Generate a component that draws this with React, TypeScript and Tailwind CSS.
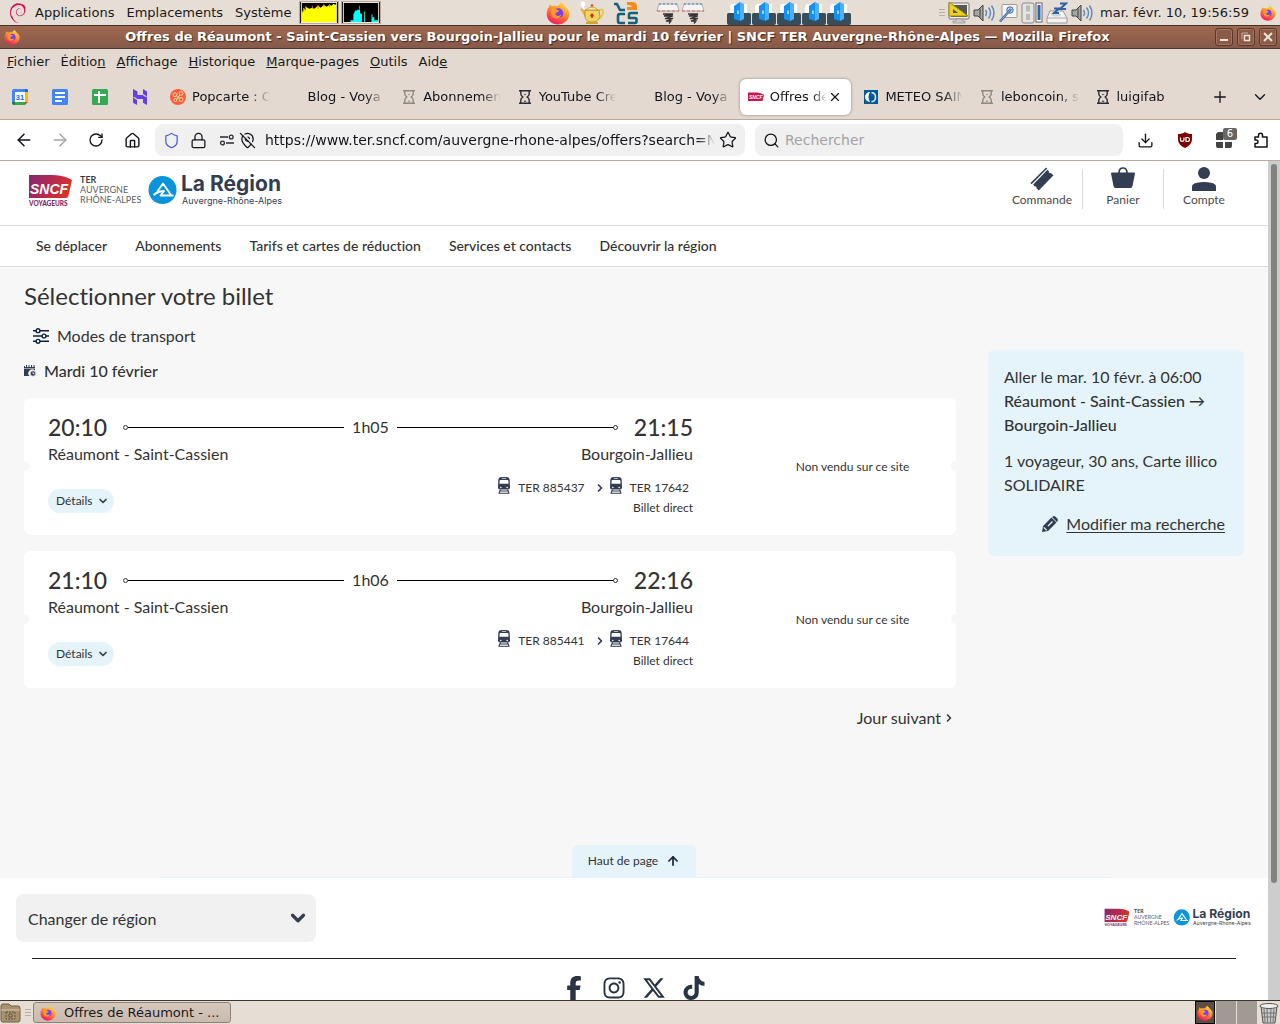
import type { ReactNode } from "react";
import {
  ArrowLeft,
  ArrowRight,
  ArrowUp,
  ChevronDown,
  ChevronRight,
  Download,
  House,
  Lock,
  MapPinOff,
  Plus,
  RotateCw,
  Search,
  Shield,
  Star,
  X,
} from "lucide-react";
import { FaFacebookF, FaInstagram, FaTiktok, FaXTwitter } from "react-icons/fa6";
import { SiDebian } from "react-icons/si";

type Tab = { title: string; icon?: ReactNode; active?: boolean };

type Offer = {
  departure: string;
  arrival: string;
  duration: string;
  from: string;
  to: string;
  trains: string[];
};

const offers: Offer[] = [
  {
    departure: "20:10",
    arrival: "21:15",
    duration: "1h05",
    from: "Réaumont - Saint-Cassien",
    to: "Bourgoin-Jallieu",
    trains: ["TER 885437", "TER 17642"],
  },
  {
    departure: "21:10",
    arrival: "22:16",
    duration: "1h06",
    from: "Réaumont - Saint-Cassien",
    to: "Bourgoin-Jallieu",
    trains: ["TER 885441", "TER 17644"],
  },
];

/* ---------- Icons ---------- */

function FirefoxIcon({ className }: { className?: string }) {
  return (
    <svg viewBox="0 0 24 24" className={className} aria-hidden="true">
      <defs>
        <linearGradient id="ff-body" x1="0.8" y1="0" x2="0.3" y2="1">
          <stop offset="0" stopColor="#ffe14a" />
          <stop offset="0.45" stopColor="#ff9028" />
          <stop offset="0.75" stopColor="#ff4a45" />
          <stop offset="1" stopColor="#e9146f" />
        </linearGradient>
      </defs>
      <path
        d="M15 1c3 2 3.500 4 5 5.500C22.300 8.500 23.500 10.500 23.300 13.500 23 19 18 23.500 12 23.500S.7 19 .7 13C.7 10 1.700 7.500 3 6c0-1 .2-2 .8-2.800C4.500 4.200 5.300 5 6.500 5.300 8 4.500 9 4.800 10.500 5.200 12 4.500 14.500 3.500 15 1z"
        fill="url(#ff-body)"
      />
      <circle cx="12.300" cy="12.300" r="5" fill="#7a3ff0" />
      <path d="M6 8c2-1 4-.5 5 .8 1.500.2 2 .7 1.500 1.700-1 1.200-3 .8-3.200 2.500.5 2.500 4.500 2.500 6 .5-1 5.500-9 5.500-10 0C5 11.500 5 9.500 6 8z" fill="#ff9a28" />
    </svg>
  );
}

function HourglassIcon({ className }: { className?: string }) {
  return (
    <svg viewBox="0 0 16 16" className={className} fill="none" stroke="currentColor" strokeWidth="1.400" aria-hidden="true">
      <path d="M2 1.700h12M2 14.300h12" />
      <path d="M3.800 2v3q0 1.500 2 3-2 1.500-2 3v3M12.200 2v3q0 1.500-2 3 2 1.500 2 3v3" />
      <path d="M6.800 5h2.400L8 6.300zM6.500 12.800L8 11.300l1.500 1.500z" fill="currentColor" stroke="none" />
    </svg>
  );
}

function CalendarTabIcon() {
  return (
    <svg viewBox="0 0 16 16" className="size-4" aria-hidden="true">
      <path d="M0 2a2 2 0 0 1 2-2h11v3H3v10H0z" fill="#4285f4" />
      <path d="M13 0h1.500A1.500 1.500 0 0 1 16 1.500V3h-3z" fill="#1967d2" />
      <path d="M13 3h3v10h-3z" fill="#fbbc04" />
      <path d="M0 13h3v3H2a2 2 0 0 1-2-2z" fill="#188038" />
      <path d="M3 13h10v3H3z" fill="#34a853" />
      <path d="M13 13h3l-3 3z" fill="#ea4335" />
      <path d="M3 3h10v10H3z" fill="#fff" />
      <text x="8" y="11" fontSize="7.500" fontWeight="700" textAnchor="middle" fill="#1967d2" fontFamily="Liberation Sans">31</text>
    </svg>
  );
}

function DocsTabIcon() {
  return (
    <svg viewBox="0 0 16 16" className="size-4" aria-hidden="true">
      <rect width="16" height="16" rx="1.500" fill="#4285f4" />
      <path d="M3 4h10M3 8h10M3 12h7" stroke="#fff" strokeWidth="2" />
    </svg>
  );
}

function SheetsTabIcon() {
  return (
    <svg viewBox="0 0 16 16" className="size-4" aria-hidden="true">
      <rect width="16" height="16" rx="1.500" fill="#34a853" />
      <path d="M2 6h12M7 2v12" stroke="#fff" strokeWidth="2" />
    </svg>
  );
}

function HTabIcon() {
  return (
    <svg viewBox="0 0 16 16" className="size-4" fill="#673de6" aria-hidden="true">
      <path d="M1 0l4.500 2.500V6h5l3.500 2.200H1zM11 5V0l4 2.400V7.500zM15 16l-4-2.300V10H5.500L2 7.800h13zM5 11v5l-4-2.200V8.500z" />
    </svg>
  );
}

function PopcarteIcon() {
  return (
    <svg viewBox="0 0 16 16" className="size-4" fill="none" stroke="#ffe0a0" aria-hidden="true">
      <circle cx="8" cy="8" r="8" fill="#ff5a3c" stroke="none" />
      <circle cx="5" cy="5.700" r="1.900" />
      <circle cx="11" cy="4.500" r="1.900" />
      <circle cx="11" cy="10.500" r="2" />
      <circle cx="5.300" cy="11" r="1.500" />
      <path d="M6.500 7l3 2.300M9.800 6l-3 4" />
    </svg>
  );
}

function MeteoIcon() {
  return (
    <svg viewBox="0 0 16 16" className="size-4" aria-hidden="true">
      <rect x="1" y="1" width="14" height="14" fill="#005a96" />
      <path d="M7 3a5 5 0 0 0 0 10c-2-3-2-7 0-10z" fill="#fff" />
      <path d="M8.500 3.500a4.700 4.700 0 0 1 0 9.300" fill="none" stroke="#dcebf5" strokeWidth="1.600" />
    </svg>
  );
}

function SncfTabIcon() {
  return (
    <svg viewBox="0 0 16 16" className="size-4" aria-hidden="true">
      <path d="M0 3.500h9.500Q14 4 16 6l-1.500 6H0z" fill="#d0124a" />
      <text x="1" y="10" fontSize="5" fontWeight="700" fontStyle="italic" fill="#fff" fontFamily="Liberation Sans">SNCF</text>
    </svg>
  );
}

function TuneIcon() {
  return (
    <svg viewBox="0 0 16 12" className="h-3 w-4" fill="none" stroke="#2b2a33" strokeWidth="1.300" aria-hidden="true">
      <path d="M1 3h8M7 9h8" />
      <circle cx="12.200" cy="3" r="1.900" />
      <circle cx="3.500" cy="9" r="1.900" />
    </svg>
  );
}

function UblockIcon() {
  return (
    <svg viewBox="0 0 16 16" className="size-4" aria-hidden="true">
      <path d="M8 0c2 1.500 4 2 7 2v5c0 4.500-3 7-7 9-4-2-7-4.500-7-9V2c3 0 5-.5 7-2z" fill="#800000" />
      <path d="M3.500 5.500v2.200c0 2.200 3.500 2.200 3.500 0V5.500M9 5.500v4h1.500a2 2 0 0 0 0-4z" fill="none" stroke="#fff" strokeWidth="1.200" />
    </svg>
  );
}

function ExtensionsIcon() {
  return (
    <svg viewBox="0 0 16 16" className="size-4" fill="none" stroke="currentColor" strokeWidth="1.500" strokeLinejoin="round" aria-hidden="true">
      <path d="M2 5h3.500V3.300a2 2 0 0 1 4 0V5H14v10H2v-3.500h1.200a1.700 1.700 0 0 0 0-3.500H2z" />
    </svg>
  );
}

function SpeakerIcon() {
  return (
    <svg viewBox="0 0 22 20" className="h-5 w-[22px]" fill="none" aria-hidden="true">
      <path d="M1 7h4l5-5v16l-5-5H1z" fill="#a5a7a3" stroke="#3f423e" />
      <path d="M7 5.500v9" stroke="#3f423e" />
      <path d="M12.500 7q2 3 0 6M15.500 4.500q4 5.500 0 11M18.500 2.500q5 7.500 0 15" stroke="#5c86bd" strokeWidth="1.400" />
    </svg>
  );
}

function DisplayIcon() {
  return (
    <svg viewBox="0 0 22 22" className="size-[22px]" aria-hidden="true">
      <rect x="1" y="1" width="20" height="16" rx="1" fill="#eee" stroke="#777" />
      <rect x="3" y="3" width="16" height="12" fill="#555753" />
      <path d="M1 0v14h19z" fill="#edd024" stroke="#a28a08" />
      <path d="M5 7v4h5z" fill="#555753" />
      <path d="M8 17h6v2h3v2H5v-2h3z" fill="#ccc" stroke="#888" strokeWidth=".6" />
    </svg>
  );
}

function WandIcon() {
  return (
    <svg viewBox="0 0 20 20" className="size-5" aria-hidden="true">
      <rect x="4" y="1.500" width="15" height="13" rx="1" fill="#f6f6f6" stroke="#999" />
      <circle cx="12" cy="7" r="3.200" fill="#cfdcec" stroke="#3465a4" />
      <path d="M13 6L2 18.500" stroke="#3465a4" strokeWidth="2.400" />
      <path d="M12.500 6.500L2 18.500" stroke="#8fb1dc" />
    </svg>
  );
}

function DeviceIcon() {
  return (
    <svg viewBox="0 0 22 22" className="size-[22px]" aria-hidden="true">
      <rect x="1" y="1" width="12" height="20" rx="2" fill="#e4e5e2" stroke="#888" />
      <path d="M5 3.500h4v6H5zM5 12h4v6H5z" fill="#b9bcb5" />
      <rect x="15" y="1" width="6" height="19" fill="#fff" stroke="#666" />
      <rect x="16.500" y="3" width="3" height="15" fill="#3465a4" />
    </svg>
  );
}

function SleepDriveIcon() {
  return (
    <svg viewBox="0 0 22 22" className="size-[22px]" aria-hidden="true">
      <path d="M4 9h13l4 7v5H1v-5z" fill="#f4f4f2" stroke="#999" />
      <path d="M1 16h20" stroke="#aaa" />
      <ellipse cx="10" cy="12.500" rx="5" ry="2" fill="#d3d5d0" />
      <path d="M8 6.500h5L8 11h5M14 1.500h6L14 7h6" fill="none" stroke="#2f62a6" strokeWidth="2" />
    </svg>
  );
}

function LampIcon() {
  return (
    <svg viewBox="0 0 24 24" className="size-6" aria-hidden="true">
      <path d="M1 8q3 2 4 6l3 1" fill="none" stroke="#e2b432" strokeWidth="2.400" />
      <path d="M19 9q5-2 4 3-1 4-5 6" fill="none" stroke="#ecc94b" strokeWidth="2" />
      <path d="M5 9h14l1 7q-2 5-8 5t-7-5z" fill="#f2d461" stroke="#a97e10" strokeWidth=".7" />
      <path d="M6 9q6-6 12 0z" fill="#fbeaa4" stroke="#a97e10" strokeWidth=".6" />
      <circle cx="12" cy="4.500" r="1.300" fill="#d8462e" />
      <path d="M12 12l2 2.500-2 3-2-3z" fill="#d02f20" />
      <circle cx="3" cy="3" r="2.400" fill="#fff" />
      <path d="M2 4l2 4" stroke="#fff" strokeWidth="2" />
      <path d="M6 21h12v2H6z" fill="#d5a42a" />
    </svg>
  );
}

function CircuitIcon() {
  return (
    <svg viewBox="0 0 24 24" className="size-6" fill="none" stroke="#15607a" strokeWidth="2.600" strokeLinejoin="round" aria-hidden="true">
      <path d="M0 3h3l3 6h5" />
      <path d="M11 13H6q-2 0-2 2v5q0 2 2 2h5" />
      <path d="M24 12h-7q-2 0-2 2v3h6q1.500 0 1.500 1.500v2q0 1.500-1.500 1.500h-7" />
      <path d="M13 1h5q5 0 5 5v3H13V6h5q0-2-5-2z" fill="#f28c1c" stroke="none" />
    </svg>
  );
}

function SpringIcon() {
  return (
    <svg viewBox="0 0 24 24" className="size-6" aria-hidden="true">
      <path d="M3 3h18l2 7H1z" fill="#f4f4f4" stroke="#999" strokeWidth=".7" />
      <path d="M1 10h22" stroke="#d66" strokeDasharray="3 2" />
      <path d="M3 3h18" stroke="#47c" strokeDasharray="2 2" />
      <path d="M7 13h10L8 15h9l-8 2.500h8L10 20h5l-2 2.500" fill="none" stroke="#333" strokeWidth="1.300" />
    </svg>
  );
}

function FolderDoorIcon() {
  return (
    <svg viewBox="0 0 24 24" className="size-6" aria-hidden="true">
      <path d="M5 3h15v11H3V5z" fill="#fff" />
      <path d="M0 13.500Q0 12 1.500 12h21q1.500 0 1.500 1.500V22q0 2-2 2H2q-2 0-2-2z" fill="#364e5c" />
      <path d="M7 5l6-4v19l-6-2z" fill="#1191f2" />
      <path d="M13 1l4 2v15l-4 2z" fill="#4bb0ff" />
      <path d="M11 9.500v3.500" stroke="#fff" strokeWidth="1.200" />
    </svg>
  );
}

function TrainIcon() {
  return (
    <svg viewBox="0 0 12 17" className="h-[17px] w-3" aria-hidden="true">
      <path d="M3.500 0h5q3 0 3.200 3l.3 7.500q0 2-2 2H2q-2 0-2-2L.3 3Q.5 0 3.500 0z" fill="#343e52" />
      <path d="M1.800 3h8.400l.4 3.700H1.400z" fill="#fff" />
      <path d="M3.800 1.400h4.400" stroke="#fff" strokeWidth=".7" />
      <circle cx="2.800" cy="10.500" r=".8" fill="#fff" />
      <circle cx="9.200" cy="10.500" r=".8" fill="#fff" />
      <path d="M2.500 12.500L.8 16.500M9.500 12.500l1.700 4M2 14h8M.5 16.300h11" stroke="#343e52" strokeWidth="1.100" />
    </svg>
  );
}

function FiltersIcon() {
  return (
    <svg viewBox="0 0 16 16" className="size-4" fill="none" stroke="#0c2143" strokeWidth="1.400" aria-hidden="true">
      <path d="M0 2.700h3M7 2.700h9M0 8h9M13 8h3M0 13.300h3M7 13.300h9" />
      <circle cx="5" cy="2.700" r="1.900" />
      <circle cx="11" cy="8" r="1.900" />
      <circle cx="5" cy="13.300" r="1.900" />
    </svg>
  );
}

function CalendarClockIcon() {
  return (
    <svg viewBox="0 0 12 12" className="size-3" fill="#343e52" aria-hidden="true">
      <path d="M0 3.500h11v2A3.500 3.500 0 0 0 5.500 11H0z" />
      <path d="M0 1h1v2H0zM2 0h1v2.500H2zM4.500 0h1v2.500h-1zM7 0h1v2.500H7zM9.500 0h1v2.500h-1zM0 2h11v1H0z" />
      <circle cx="9" cy="8.500" r="2.700" stroke="#f7f7f7" strokeWidth=".6" />
      <path d="M9 7v1.700h1.500" stroke="#f7f7f7" strokeWidth=".8" fill="none" />
    </svg>
  );
}

function PencilIcon() {
  return (
    <svg viewBox="0 0 16 16" className="size-4" aria-hidden="true">
      <path d="M9.500 1.500l5 5L6 15 0 16l1-6zM10.500.7Q12-.5 13.500.7l1.800 1.800q1.200 1.500 0 3l-.4.400-4.800-4.800z" fill="#343e52" />
      <path d="M6 10l4.500-4.500M1.800 11.300l3 3" stroke="#e5f3fb" strokeWidth="1.200" />
    </svg>
  );
}

function TicketIcon() {
  return (
    <svg viewBox="0 0 26 26" className="size-6" fill="#343e52" aria-hidden="true">
      <path d="M19 3l1.500 1.500a1.500 1.500 0 0 0 2 2L25.500 9 9.500 25.500 7 23a1.500 1.500 0 0 0-2-2l-1.500-2z" />
      <path d="M17.500.5l1.200 1.200L1.800 18.600.5 17.300z" />
    </svg>
  );
}

function BasketIcon() {
  return (
    <svg viewBox="0 0 24 24" className="size-6" aria-hidden="true">
      <path d="M0 6.500q0-1 1-1h22q1 0 1 1l-2.500 12.500q-.3 2-2 2h-15q-1.700 0-2-2z" fill="#343e52" />
      <path d="M8 6q0-5 4-5t4 5" fill="none" stroke="#343e52" strokeWidth="1.700" />
    </svg>
  );
}

function AccountIcon() {
  return (
    <svg viewBox="0 0 24 24" className="size-6" fill="#343e52" aria-hidden="true">
      <circle cx="12" cy="6" r="6" />
      <path d="M0 24v-4.500q0-2.500 4-3.500 8-2 16 0 4 1 4 3.500V24z" />
    </svg>
  );
}

function TerLogo({ className }: { className?: string }) {
  return (
    <svg viewBox="0 0 256 34" className={className} role="img" aria-label="SNCF Voyageurs TER Auvergne-Rhône-Alpes">
      <defs>
        <linearGradient id="sncf-fill" x1="0" y1="0" x2="1" y2="0.300">
          <stop offset="0" stopColor="#82286e" />
          <stop offset="0.550" stopColor="#b52a4e" />
          <stop offset="1" stopColor="#d83226" />
        </linearGradient>
      </defs>
      <path d="M1 1h24q12 .5 19 5l-3.500 15.500q-.5 2.500-3 2.500H1z" fill="url(#sncf-fill)" />
      <text x="2" y="20" fontSize="14" fontWeight="700" fontStyle="italic" fill="#fff" fontFamily="Liberation Sans">SNCF</text>
      <text x="1" y="31.500" fontSize="6.500" fontWeight="900" fill="#82286e" fontFamily="Lato">VOYAGEURS</text>
      <g fontFamily="Lato" fontSize="9" fill="#5b6068">
        <text x="52" y="9" fontWeight="700" fill="#3c3f45">TER</text>
        <text x="52" y="18.500">AUVERGNE</text>
        <text x="52" y="29">RHÔNE-ALPES</text>
      </g>
      <circle cx="134.500" cy="16" r="14" fill="#0a94dc" />
      <path d="M129 18l6-8.500 8 11.500M125.500 21q5-4 10.500-4l-3.500 4.500h13" fill="none" stroke="#fff" strokeWidth="1.800" strokeLinejoin="round" />
      <text x="153" y="16.500" fontSize="21" fontWeight="700" fill="#343e52" fontFamily="Inter">La Région</text>
      <text x="154" y="29.500" fontSize="9" fill="#343e52" fontFamily="Inter">Auvergne-Rhône-Alpes</text>
    </svg>
  );
}

/* ---------- Desktop panels ---------- */

function TopPanel() {
  return (
    <div className="flex h-[26px] shrink-0 items-center border-b border-[#3f352f] bg-[#e6ddd4] text-[13px] text-[#1a1a1a]">
      <SiDebian className="ml-2 size-5 shrink-0 text-[#d70a53]" />
      <nav className="ml-[7px] flex gap-3">
        <button type="button">Applications</button>
        <button type="button">Emplacements</button>
        <button type="button">Système</button>
      </nav>
      <div className="ml-[7px] flex gap-[2px]">
        <svg viewBox="0 0 38 22" className="h-[23px] w-10 border border-[#b8a89a] bg-black" aria-hidden="true">
          <path d="M1 22V12l2-6 2 3V5l4 2 3-1 2 1 4-3 3 2 3-3 3 2 3-2 2 1 2-2 3 1v20z" fill="#ff0" />
          <path d="M3 6v4M5 4v3M12 4v3M18 3v4M24 2v3M30 2v3" stroke="#f60" />
          <rect x=".5" y=".5" width="37" height="21" fill="none" stroke="#f5efe8" />
        </svg>
        <svg viewBox="0 0 38 22" className="h-[23px] w-10 border border-[#b8a89a] bg-black" aria-hidden="true">
          <path d="M8 21v-2h3v-6l2-4h2V8h3v4h2v9zM22 21V10h1v11zM30 21v-8h1v3h2v3h4v2z" fill="#0ff" />
          <path d="M17.500 4v4M23 13v3" stroke="#c80" />
          <rect x=".5" y=".5" width="37" height="21" fill="none" stroke="#f5efe8" />
        </svg>
      </div>
      <div className="ml-[165px] flex items-center gap-[10px]">
        <FirefoxIcon className="size-6" />
        <LampIcon />
        <CircuitIcon />
      </div>
      <div className="ml-[18px] flex items-center gap-px">
        <SpringIcon />
        <SpringIcon />
      </div>
      <div className="ml-[22px] flex items-center gap-px">
        {[0, 1, 2, 3, 4].map((n) => (
          <FolderDoorIcon key={n} />
        ))}
      </div>
      <div className="ml-auto flex items-center gap-[3px] pr-1">
        <PanelHandle />
        <DisplayIcon />
        <SpeakerIcon />
        <WandIcon />
        <DeviceIcon />
        <SleepDriveIcon />
        <SpeakerIcon />
        <span className="ml-1 whitespace-nowrap">mar. févr. 10, 19:56:59</span>
        <FirefoxIcon className="ml-2 size-4" />
      </div>
    </div>
  );
}

function PanelHandle() {
  return (
    <span className="flex w-[6px] flex-col gap-[2px]">
      <i className="h-px bg-[#b9ada1]" />
      <i className="h-px bg-[#b9ada1]" />
      <i className="h-px bg-[#b9ada1]" />
    </span>
  );
}

function BottomPanel() {
  return (
    <div className="flex h-6 shrink-0 items-center border-t border-[#3f352f] bg-[#e6ddd4] text-[13px] text-[#1a1a1a]">
      <svg viewBox="0 0 22 20" className="h-5 w-[22px]" aria-hidden="true">
        <path d="M1 3q0-2 2-2h6l2 2h7q2 0 2 2v12q0 2-2 2H3q-2 0-2-2z" fill="#a8936f" stroke="#6e5c40" />
        <path d="M1 7h19" stroke="#d5c6a8" />
        <rect x="6" y="9" width="9" height="7" fill="none" stroke="#5e4d34" strokeDasharray="2 1" />
        <circle cx="10.500" cy="12.500" r="1.800" fill="none" stroke="#5e4d34" />
      </svg>
      <span className="ml-[3px]"><PanelHandle /></span>
      <button type="button" className="ml-[2px] flex h-[21px] w-[198px] items-center gap-2 rounded-[3px] border border-[#8d8178] bg-linear-to-b from-[#d6c8bd] to-[#cabaae] pl-[6px]">
        <FirefoxIcon className="size-4" />
        Offres de Réaumont - ...
      </button>
      <div className="ml-auto flex h-full items-center gap-px">
        <span className="flex h-full w-5 items-center justify-center border border-black bg-[#5f4d45]">
          <FirefoxIcon className="size-4" />
        </span>
        <span className="h-full w-5 bg-[#a09a93]" />
        <span className="h-full w-5 bg-[#a09a93]" />
        <svg viewBox="0 0 22 22" className="size-[22px]" aria-hidden="true">
          <path d="M3 4l2 17h12l2-17z" fill="#c7c9c4" stroke="#555" />
          <path d="M6 7l1 13M9 7l.5 13M13 7l-.5 13M16 7l-1 13M4 11h14M5 15h12" stroke="#666" strokeWidth=".8" />
          <ellipse cx="11" cy="4" rx="9" ry="2.500" fill="#eee" stroke="#555" />
        </svg>
      </div>
    </div>
  );
}

/* ---------- Browser window ---------- */

const windowButton =
  "flex size-[18px] items-center justify-center rounded-[3px] border border-[#56382c] bg-[#8c5b48] text-[#efe2da] shadow-[inset_0_0_0_1px_#a5735f]";

function TitleBar() {
  return (
    <div className="flex h-[23px] shrink-0 items-center border-b border-[#4e372c] bg-linear-to-b from-[#a0694f] to-[#85594a] text-white">
      <FirefoxIcon className="ml-1 size-4" />
      <h1 className="flex-1 truncate text-center text-[13px] font-bold [text-shadow:1px_1px_1px_#3d271e]">
        Offres de Réaumont - Saint-Cassien vers Bourgoin-Jallieu pour le mardi 10 février | SNCF TER Auvergne-Rhône-Alpes — Mozilla Firefox
      </h1>
      <div className="mr-[3px] flex gap-1">
        <button type="button" aria-label="Réduire" className={windowButton}>
          <svg viewBox="0 0 10 10" className="size-[10px]"><path d="M1 8h8" stroke="currentColor" strokeWidth="2" /></svg>
        </button>
        <button type="button" aria-label="Restaurer" className={windowButton}>
          <svg viewBox="0 0 10 10" className="size-[10px]" fill="none" stroke="currentColor">
            <path d="M1 7V1h6" strokeWidth=".6" />
            <rect x="3.500" y="3.500" width="5" height="5" strokeWidth="1.500" />
          </svg>
        </button>
        <button type="button" aria-label="Fermer" className={windowButton}>
          <svg viewBox="0 0 10 10" className="size-[10px]"><path d="M1 1l8 8M9 1L1 9" stroke="currentColor" strokeWidth="2" /></svg>
        </button>
      </div>
    </div>
  );
}

function MenuBar() {
  return (
    <div className="flex h-[26px] shrink-0 items-center gap-[11px] bg-[#e3d9d0] pl-[7px] text-[13px] text-[#1a1a1a]">
      <button type="button"><u>F</u>ichier</button>
      <button type="button">Éditio<u>n</u></button>
      <button type="button"><u>A</u>ffichage</button>
      <button type="button"><u>H</u>istorique</button>
      <button type="button"><u>M</u>arque-pages</button>
      <button type="button"><u>O</u>utils</button>
      <button type="button">Aid<u>e</u></button>
    </div>
  );
}

const tabs: Tab[] = [
  { title: "Popcarte : C", icon: <PopcarteIcon /> },
  { title: "Blog - Voya" },
  { title: "Abonnemen", icon: <HourglassIcon className="size-4 text-[#8f887f]" /> },
  { title: "YouTube Cre", icon: <HourglassIcon className="size-4 text-[#2b2a33]" /> },
  { title: "Blog - Voya" },
  { title: "Offres de", icon: <SncfTabIcon />, active: true },
  { title: "METEO SAIN", icon: <MeteoIcon /> },
  { title: "leboncoin, s", icon: <HourglassIcon className="size-4 text-[#8f887f]" /> },
  { title: "luigifab", icon: <HourglassIcon className="size-4 text-[#2b2a33]" /> },
];

function TabBar() {
  return (
    <div className="flex h-[45px] shrink-0 items-center border-b border-[#bba999] bg-[#e3d9d0] text-[13px] text-[#15141a]">
      {[<CalendarTabIcon />, <DocsTabIcon />, <SheetsTabIcon />, <HTabIcon />].map((icon, n) => (
        <button key={n} type="button" className="flex w-10 shrink-0 justify-center">
          {icon}
        </button>
      ))}
      {tabs.map((tab, n) => (
        <div key={n} className="h-9 min-w-0 flex-1 px-[2px]">
          <div className={tab.active ? "flex h-full items-center rounded-md bg-white px-2 shadow-[0_0_3px_#0006]" : "flex h-full items-center pr-1 pl-2"}>
            <span className="size-4 shrink-0">{tab.icon}</span>
            <button type="button" className="ml-[6px] min-w-0 flex-1 overflow-hidden whitespace-nowrap text-left [mask-image:linear-gradient(to_right,black_75%,transparent)]">
              {tab.title}
            </button>
            {tab.active && (
              <button type="button" aria-label="Fermer l’onglet" className="flex w-4 shrink-0 justify-center">
                <X className="size-[14px]" />
              </button>
            )}
          </div>
        </div>
      ))}
      <button type="button" aria-label="Nouvel onglet" className="flex w-10 shrink-0 justify-center">
        <Plus className="size-[18px]" strokeWidth={1.800} />
      </button>
      <button type="button" aria-label="Lister les onglets" className="flex w-10 shrink-0 justify-center">
        <ChevronDown className="size-[18px]" strokeWidth={1.800} />
      </button>
    </div>
  );
}

function Toolbar() {
  return (
    <div className="flex h-[41px] shrink-0 items-center border-b border-[#bba999] bg-white text-[#15141a]">
      <div className="flex w-[155px] shrink-0 items-center pl-[6px]">
        <button type="button" aria-label="Précédent" className="flex w-9 justify-center"><ArrowLeft className="size-5" strokeWidth={1.800} /></button>
        <button type="button" aria-label="Suivant" className="flex w-9 justify-center"><ArrowRight className="size-5 text-[#a5a4a8]" strokeWidth={1.800} /></button>
        <button type="button" aria-label="Actualiser" className="flex w-9 justify-center"><RotateCw className="size-4" /></button>
        <button type="button" aria-label="Accueil" className="flex w-9 justify-center"><House className="size-[17px]" strokeWidth={2} /></button>
      </div>
      <div className="flex h-8 min-w-0 flex-[574] items-center rounded-lg bg-[#f0f0f0] px-2">
        <Shield className="size-[17px] shrink-0 text-[#4a5fd8]" strokeWidth={1.800} />
        <Lock className="ml-[10px] size-[17px] shrink-0" strokeWidth={1.800} />
        <span className="ml-3 shrink-0"><TuneIcon /></span>
        <MapPinOff className="ml-1 size-[17px] shrink-0" strokeWidth={1.800} />
        <input
          aria-label="Adresse"
          className="ml-[9px] min-w-0 flex-1 bg-transparent text-[14px] outline-none [mask-image:linear-gradient(to_right,black_96%,transparent)]"
          defaultValue="https://www.ter.sncf.com/auvergne-rhone-alpes/offers?search=NWQ4ZTFh"
        />
        <Star className="ml-1 size-[18px] shrink-0" strokeWidth={1.700} />
      </div>
      <label className="ml-[10px] flex h-8 min-w-0 flex-[352] items-center rounded-lg bg-[#f0f0f0] px-2">
        <Search className="size-[17px] shrink-0" strokeWidth={1.800} />
        <input
          aria-label="Rechercher"
          placeholder="Rechercher"
          className="ml-[5px] min-w-0 flex-1 bg-transparent text-[14px] outline-none placeholder:text-[#a3a3a3]"
        />
      </label>
      <div className="flex w-[157px] shrink-0 items-center pl-[3px]">
        <button type="button" aria-label="Téléchargements" className="flex w-[39px] justify-center"><Download className="size-[17px]" strokeWidth={1.900} /></button>
        <button type="button" aria-label="uBlock Origin" className="flex w-[39px] justify-center"><UblockIcon /></button>
        <button type="button" aria-label="Extension" className="relative flex w-[39px] justify-center">
          <svg viewBox="0 0 16 16" className="size-4" fill="#444"><path d="M2 0h5v8H0V2zM0 10h7v6H2q-2 0-2-2zM9 10h7v4q0 2-2 2H9zM9 3h6v5H9z" /></svg>
          <span className="absolute -top-1 right-[6px] rounded-[2px] bg-[#666] px-1 text-[10px] leading-3 text-white">6</span>
        </button>
        <button type="button" aria-label="Extensions" className="flex w-9 justify-center"><ExtensionsIcon /></button>
      </div>
    </div>
  );
}

/* ---------- Page ---------- */

function SiteHeader() {
  const links = ["Se déplacer", "Abonnements", "Tarifs et cartes de réduction", "Services et contacts", "Découvrir la région"];
  const account = [
    { label: "Commande", icon: <TicketIcon /> },
    { label: "Panier", icon: <BasketIcon /> },
    { label: "Compte", icon: <AccountIcon /> },
  ];

  return (
    <header className="bg-white">
      <div className="flex h-[65px] items-start justify-between border-b border-[#dcdcdc]">
        <a href="#accueil" className="mt-[13px] ml-7">
          <TerLogo className="h-[34px] w-64" />
        </a>
        <div className="flex pr-6">
          {account.map((item, n) => (
            <div key={item.label} className="flex">
              {n > 0 && <span className="mt-2 h-10 w-px bg-[#dcdcdc]" />}
              <a
                href={"#" + item.label.toLowerCase()}
                className="mt-[6px] flex w-20 flex-col items-center text-[12px] leading-[18px] text-[#4a4a4a]"
              >
                {item.icon}
                {item.label}
              </a>
            </div>
          ))}
        </div>
      </div>
      <nav className="flex h-[41px] items-center gap-7 border-b border-[#dcdcdc] px-9 pb-px text-[14px] leading-5 font-medium">
        {links.map((link) => (
          <a key={link} href="#menu">{link}</a>
        ))}
      </nav>
    </header>
  );
}

function OfferCard({ offer }: { offer: Offer }) {
  return (
    <article className="relative flex rounded-md bg-white">
      <span className="absolute top-[63px] left-0 h-[10px] w-[5px] rounded-r-full bg-[#f7f7f7]" />
      <span className="absolute top-[63px] right-0 h-[10px] w-[5px] rounded-l-full bg-[#f7f7f7]" />
      <div className="min-w-0 flex-1 pt-3 pr-14 pb-[17px] pl-6">
        <div className="flex h-[34px] items-center">
          <span className="text-[23px] font-medium">{offer.departure}</span>
          <span className="ml-4 size-[5px] rounded-full border border-[#333]" />
          <span className="h-px flex-1 bg-black" />
          <span className="px-2 text-[16px]">{offer.duration}</span>
          <span className="h-px flex-1 bg-black" />
          <span className="mr-4 size-[5px] rounded-full border border-[#333]" />
          <span className="text-[23px] font-medium">{offer.arrival}</span>
        </div>
        <div className="flex justify-between text-[16px] leading-5">
          <span>{offer.from}</span>
          <span>{offer.to}</span>
        </div>
        <div className="mt-[14px] flex items-end justify-between text-[12px] leading-5">
          <button type="button" className="mb-[5px] flex h-6 items-center gap-1 rounded-full bg-[#e5f3fb] pr-[5px] pl-2">
            Détails <ChevronDown className="size-3 text-[#343e52]" strokeWidth={3.500} />
          </button>
          <div className="text-right">
            <div className="flex h-5 items-center justify-end pr-1">
              <span className="pb-[6px]"><TrainIcon /></span>
              <span className="ml-2">{offer.trains[0]}</span>
              <ChevronRight className="ml-[9px] size-3 text-[#343e52]" strokeWidth={3.500} />
              <span className="ml-1 pb-[6px]"><TrainIcon /></span>
              <span className="ml-2">{offer.trains[1]}</span>
            </div>
            <p>Billet direct</p>
          </div>
        </div>
      </div>
      <p className="flex w-[207px] shrink-0 items-center justify-center text-[12px]">Non vendu sur ce site</p>
    </article>
  );
}

function Results() {
  return (
    <main className="px-6 pt-[11px]">
      <h2 className="text-[24px] leading-9">Sélectionner votre billet</h2>
      <button type="button" className="mt-[10px] ml-[9px] flex h-6 items-center gap-2 text-[16px]">
        <FiltersIcon />
        Modes de transport
      </button>
      <div className="flex items-start gap-8">
        <section className="min-w-0 flex-1">
          <h3 className="mt-[11px] flex h-6 items-center gap-2 text-[16px] font-medium">
            <CalendarClockIcon />
            Mardi 10 février
          </h3>
          <div className="mt-[15px] flex flex-col gap-4">
            {offers.map((offer) => (
              <OfferCard key={offer.departure} offer={offer} />
            ))}
          </div>
          <a href="#demain" className="mt-[18px] flex h-6 items-center justify-end gap-[2px] pr-px text-[16px]">
            Jour suivant
            <ChevronRight className="size-3" strokeWidth={3} />
          </a>
        </section>
        <aside className="mt-[2px] w-64 shrink-0 rounded-md bg-[#e5f3fb] px-4 pt-[15px] pb-4 text-[16px] leading-6">
          <p>Aller le mar. 10 févr. à 06:00</p>
          <p className="font-medium">
            Réaumont - Saint-Cassien → Bourgoin-Jallieu
          </p>
          <p className="mt-3">1 voyageur, 30 ans, Carte illico SOLIDAIRE</p>
          <a href="#recherche" className="mt-[15px] flex items-center justify-end gap-2 pr-[3px] pb-1 underline underline-offset-2">
            <PencilIcon />
            Modifier ma recherche
          </a>
        </aside>
      </div>
      <div className="mx-auto mt-[115px] flex w-[78%] justify-center border-b border-[#e5f3fb]">
        <a href="#haut" className="flex h-8 items-center gap-2 rounded-t-md bg-[#e5f3fb] px-4 text-[12px]">
          Haut de page
          <ArrowUp className="size-[14px] text-[#1f2937]" strokeWidth={3} />
        </a>
      </div>
    </main>
  );
}

function SiteFooter() {
  return (
    <footer className="bg-white pt-4">
      <div className="flex items-center justify-between pr-4 pl-4">
        <div className="relative">
          <select aria-label="Changer de région" className="h-12 w-[300px] appearance-none rounded-lg bg-[#f1f1f1] pt-[2px] pl-3 text-[16px]">
            <option>Changer de région</option>
          </select>
          <ChevronDown className="pointer-events-none absolute top-[13px] right-[7px] size-[22px] text-[#343e52]" strokeWidth={3.500} />
        </div>
        <TerLogo className="h-5 w-[148px]" />
      </div>
      <hr className="mx-8 mt-4 border-[#222]" />
      <div className="mt-[17px] flex justify-center gap-4 text-[24px] text-[#2b3445]">
        <a href="#facebook" aria-label="Facebook"><FaFacebookF /></a>
        <a href="#instagram" aria-label="Instagram"><FaInstagram /></a>
        <a href="#x" aria-label="X"><FaXTwitter /></a>
        <a href="#tiktok" aria-label="TikTok"><FaTiktok /></a>
      </div>
    </footer>
  );
}

export default function App() {
  return (
    <div className="flex h-screen flex-col font-['DejaVu_Sans',sans-serif]">
      <TopPanel />
      <TitleBar />
      <MenuBar />
      <TabBar />
      <Toolbar />
      <div className="flex min-h-0 flex-1 bg-[#f7f7f7]">
        <div className="min-w-0 flex-1 overflow-hidden font-[Lato,sans-serif] text-[#333] [font-variant-ligatures:none]">
          <SiteHeader />
          <Results />
          <SiteFooter />
        </div>
        <div className="w-3 shrink-0 bg-[#cdcdcd] pt-[3px]">
          <div className="mx-auto h-[86%] w-[6px] rounded-full bg-[#82827e]" />
        </div>
      </div>
      <BottomPanel />
    </div>
  );
}
